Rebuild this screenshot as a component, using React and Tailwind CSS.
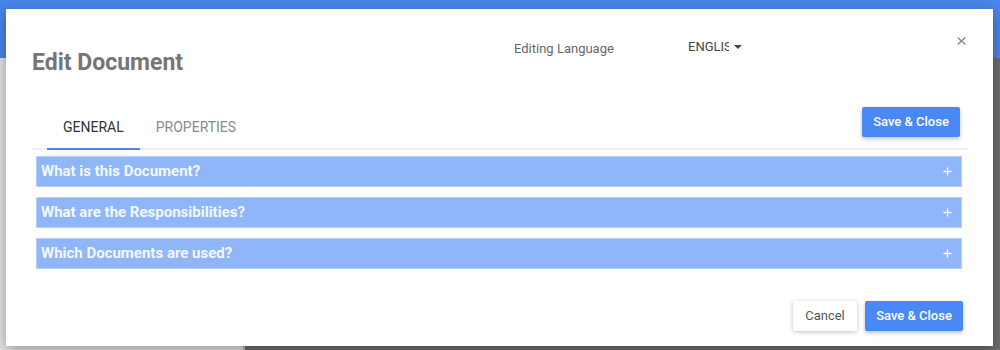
import React from "react";

const font = { fontFamily: "Roboto, 'Noto Sans', Arial, sans-serif" };

function Plus() {
  return (
    <svg width="9" height="9" viewBox="0 0 9 9" className="shrink-0">
      <path d="M4.5 0.5V8.5M0.5 4.5H8.5" stroke="#ffffff" strokeWidth="1.3" />
    </svg>
  );
}

function Row({ title }) {
  return (
    <div className="ml-[4px] mr-[5px] h-[31px] flex items-center justify-between bg-[#8fb6f8] border border-[#b5cffa] pl-[4px] pr-[9px]">
      <span className="text-[15px] font-bold text-[#f4f8ff] leading-none">{title}</span>
      <Plus />
    </div>
  );
}

export default function App() {
  return (
    <div className="relative w-[1000px] h-[350px] overflow-hidden bg-[#6e6e6e]" style={font}>
      {/* background page */}
      <div className="h-[58px] bg-[#4a86e8]" />
      <div className="flex h-[292px]">
        <div className="w-[243px] bg-[#e4e4e4]" />
        <div className="w-[2px] bg-[#a9bde0]" />
        <div className="flex-1 bg-[#6e6e6e]" />
      </div>

      {/* dialog */}
      <div className="absolute left-[6px] top-[9px] w-[987px] h-[337px] bg-white shadow-[0_4px_14px_rgba(0,0,0,0.35)] px-[26px] flex flex-col">
        {/* header */}
        <div className="h-[93px] flex items-start shrink-0">
          <div className="w-[482px] mt-[40px] text-[23px] leading-[27px] font-bold text-[#757575]">
            Edit Document
          </div>
          <div className="w-[174px] mt-[32px] text-[13px] leading-[16px] text-[#666666]">
            Editing Language
          </div>
          <div className="mt-[30px] flex items-center">
            <span className="w-[41px] overflow-hidden whitespace-nowrap text-[13px] leading-[16px] text-[#444444]">
              ENGLISH
            </span>
            <svg width="8" height="4" viewBox="0 0 8 4" className="ml-[5px]">
              <path d="M0 0H8L4 4Z" fill="#444444" />
            </svg>
          </div>
          <button className="ml-auto mt-[27px] mr-[1px] w-[10px] h-[10px] flex items-center justify-center">
            <svg width="9" height="8" viewBox="0 0 9 8">
              <path d="M0.7 0.5L8.3 7.5M8.3 0.5L0.7 7.5" stroke="#8a8a8a" strokeWidth="1.4" />
            </svg>
          </button>
        </div>

        {/* tabs row */}
        <div className="h-[48px] flex items-stretch border-b-2 border-[#eeeeee] shrink-0">
          <div className="ml-[15px] flex">
            <div className="px-[16px] pt-[4px] flex items-center border-b-2 border-[#4a86e8] -mb-[2px] text-[14px] text-[#333333]">
              GENERAL
            </div>
            <div className="px-[16px] pt-[4px] flex items-center text-[14px] text-[#8a8a8a]">
              PROPERTIES
            </div>
          </div>
          <button className="ml-auto self-start mt-[5px] mr-[7px] w-[98px] h-[30px] rounded-[2px] bg-[#4a89f3] text-white text-[13px] font-medium shadow-[0_2px_4px_rgba(0,0,0,0.25)]">
            Save &amp; Close
          </button>
        </div>

        {/* accordion */}
        <div className="mt-[6px] flex flex-col gap-[10px]">
          <Row title="What is this Document?" />
          <Row title="What are the Responsibilities?" />
          <Row title="Which Documents are used?" />
        </div>

        {/* footer */}
        <div className="mt-auto mb-[15px] flex justify-end gap-[8px] mr-[4px]">
          <button className="w-[64px] h-[30px] rounded-[2px] bg-white text-[#555555] text-[13px] shadow-[0_1px_4px_rgba(0,0,0,0.25)]">
            Cancel
          </button>
          <button className="w-[98px] h-[30px] rounded-[2px] bg-[#4a89f3] text-white text-[13px] font-medium shadow-[0_2px_4px_rgba(0,0,0,0.25)]">
            Save &amp; Close
          </button>
        </div>
      </div>
    </div>
  );
}
